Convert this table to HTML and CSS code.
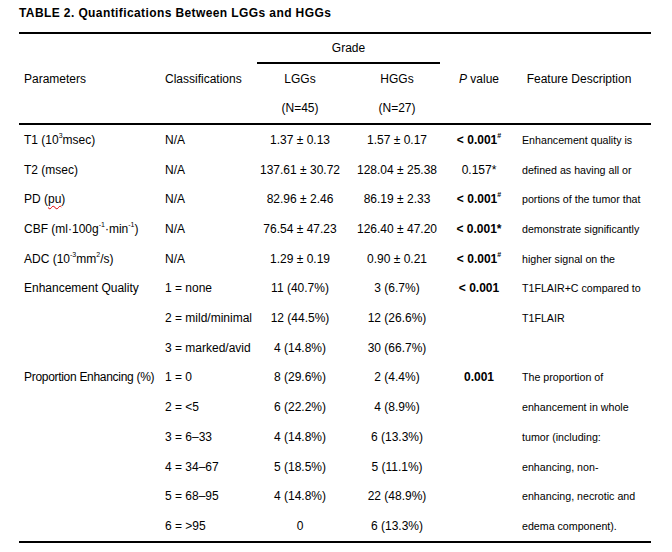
FILE: index.html
```html
<!DOCTYPE html>
<html>
<head>
<meta charset="utf-8">
<link rel="stylesheet" href="styles.css">
</head>
<body>
<div class="page">
  <div class="title">TABLE 2. Quantifications Between LGGs and HGGs</div>
  <div class="table">
    <div class="thead">
      <div class="grade">Grade</div>
      <div class="c1 r2">Parameters</div>
      <div class="c2 r2">Classifications</div>
      <div class="num r2">LGGs</div>
      <div class="num r2">HGGs</div>
      <div class="pv r2"><i>P</i>&nbsp;value</div>
      <div class="feat r2">Feature Description</div>
      <div class="num c3 r3">(N=45)</div>
      <div class="num c4 r3">(N=27)</div>
    </div>
    <div class="tbody">
      <div class="c1">T1 (10<sup>3</sup>msec)</div><div class="c2">N/A</div><div class="num">1.37 ± 0.13</div><div class="num">1.57 ± 0.17</div><div class="pv b">&lt; 0.001<sup>#</sup></div><div class="desc">Enhancement quality is</div>
      <div class="c1">T2 (msec)</div><div class="c2">N/A</div><div class="num">137.61 ± 30.72</div><div class="num">128.04 ± 25.38</div><div class="pv">0.157*</div><div class="desc">defined as having all or</div>
      <div class="c1">PD (<span class="spell">pu</span>)</div><div class="c2">N/A</div><div class="num">82.96 ± 2.46</div><div class="num">86.19 ± 2.33</div><div class="pv b">&lt; 0.001<sup>#</sup></div><div class="desc">portions of the tumor that</div>
      <div class="c1">CBF (ml·100g<sup>-1</sup>·min<sup>-1</sup>)</div><div class="c2">N/A</div><div class="num">76.54 ± 47.23</div><div class="num">126.40 ± 47.20</div><div class="pv b">&lt; 0.001*</div><div class="desc">demonstrate significantly</div>
      <div class="c1">ADC (10<sup>-3</sup>mm<sup>2</sup>/s)</div><div class="c2">N/A</div><div class="num">1.29 ± 0.19</div><div class="num">0.90 ± 0.21</div><div class="pv b">&lt; 0.001<sup>#</sup></div><div class="desc">higher signal on the</div>
      <div class="c1">Enhancement Quality</div><div class="c2">1 = none</div><div class="num">11 (40.7%)</div><div class="num">3 (6.7%)</div><div class="pv b">&lt; 0.001</div><div class="desc">T1FLAIR+C compared to</div>
      <div class="c1"></div><div class="c2">2 = mild/minimal</div><div class="num">12 (44.5%)</div><div class="num">12 (26.6%)</div><div class="pv"></div><div class="desc">T1FLAIR</div>
      <div class="c1"></div><div class="c2">3 = marked/avid</div><div class="num">4 (14.8%)</div><div class="num">30 (66.7%)</div><div class="pv"></div><div class="desc"></div>
      <div class="c1 tight">Proportion Enhancing (%)</div><div class="c2">1 = 0</div><div class="num">8 (29.6%)</div><div class="num">2 (4.4%)</div><div class="pv b">0.001</div><div class="desc">The proportion of</div>
      <div class="c1"></div><div class="c2">2 = &lt;5</div><div class="num">6 (22.2%)</div><div class="num">4 (8.9%)</div><div class="pv"></div><div class="desc">enhancement in whole</div>
      <div class="c1"></div><div class="c2">3 = 6–33</div><div class="num">4 (14.8%)</div><div class="num">6 (13.3%)</div><div class="pv"></div><div class="desc">tumor (including:</div>
      <div class="c1"></div><div class="c2">4 = 34–67</div><div class="num">5 (18.5%)</div><div class="num">5 (11.1%)</div><div class="pv"></div><div class="desc">enhancing, non-</div>
      <div class="c1"></div><div class="c2">5 = 68–95</div><div class="num">4 (14.8%)</div><div class="num">22 (48.9%)</div><div class="pv"></div><div class="desc">enhancing, necrotic and</div>
      <div class="c1"></div><div class="c2">6 = &gt;95</div><div class="num">0</div><div class="num">6 (13.3%)</div><div class="pv"></div><div class="desc">edema component).</div>
    </div>
  </div>
</div>
</body>
</html>
```

FILE: styles.css
```css
html, body {
  margin: 0;
  padding: 0;
  background: #fff;
}
body {
  font-family: "Liberation Sans", Arial, sans-serif;
  font-size: 12px;
  color: #000;
}
.page {
  padding: 6px 21px 0 19px;
  width: 632px;
}
.title {
  font-weight: bold;
  font-size: 12px;
  line-height: 14px;
  letter-spacing: 0.4px;
  margin-bottom: 12px;
  white-space: nowrap;
}
.table {
  border-top: 2px solid #000;
  border-bottom: 2px solid #000;
}
.thead, .tbody {
  display: grid;
  grid-template-columns: 141px 94px 92px 102px 62px 141px;
}
.thead {
  grid-template-rows: 30px 29px 30px;
  border-bottom: 2px solid #000;
}
.tbody {
  grid-auto-rows: 29.71px;
}
.thead > div, .tbody > div {
  display: flex;
  align-items: center;
  white-space: nowrap;
}
.grade {
  grid-column: 3 / 5;
  grid-row: 1;
  justify-content: center;
  margin: 0 8px 0 3px;
  border-bottom: 2px solid #000;
  box-sizing: border-box;
}
.r2 { grid-row: 2; }
.r3 { grid-row: 3; }
.c3 { grid-column: 3; }
.c4 { grid-column: 4; }
.c1 { padding-left: 5px; }
.c2 { padding-left: 5px; }
.tight { letter-spacing: -0.3px; }
.num { justify-content: center; }
.pv { justify-content: center; }
.b { font-weight: bold; }
.feat {
  justify-content: center;
  padding: 0 15px 0 12px;
}
.desc {
  padding-left: 12px;
  font-size: 10.67px;
}
sup {
  font-size: 7px;
  line-height: 0;
  vertical-align: 0;
  position: relative;
  top: -4px;
}
.spell {
  text-decoration: underline wavy #e00000;
  text-decoration-thickness: 1px;
  text-underline-offset: 2px;
}
```
